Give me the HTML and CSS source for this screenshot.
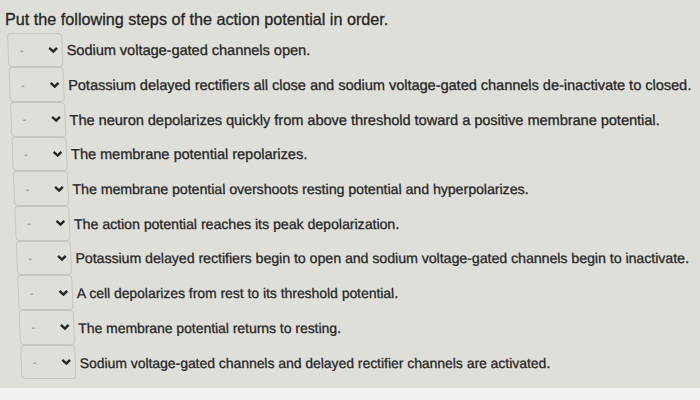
FILE: index.html
```html
<!DOCTYPE html>
<html lang="en">
<head>
    <meta charset="UTF-8">
    <title>Action potential ordering</title>
    <link rel="stylesheet" href="styles.css">
</head>
<body>
    <div class="page">
        <p class="prompt">Put the following steps of the action potential in order.</p>
        <ul class="steps">
            <li class="step">
                <span class="order-select"><span class="dash">-</span><svg class="chevron" viewBox="0 0 10 7"><polyline points="1.5,1.5 5,5 8.5,1.5"/></svg></span>
                <span class="step-text">Sodium voltage-gated channels open.</span>
            </li>
            <li class="step">
                <span class="order-select"><span class="dash">-</span><svg class="chevron" viewBox="0 0 10 7"><polyline points="1.5,1.5 5,5 8.5,1.5"/></svg></span>
                <span class="step-text">Potassium delayed rectifiers all close and sodium voltage-gated channels de-inactivate to closed.</span>
            </li>
            <li class="step">
                <span class="order-select"><span class="dash">-</span><svg class="chevron" viewBox="0 0 10 7"><polyline points="1.5,1.5 5,5 8.5,1.5"/></svg></span>
                <span class="step-text">The neuron depolarizes quickly from above threshold toward a positive membrane potential.</span>
            </li>
            <li class="step">
                <span class="order-select"><span class="dash">-</span><svg class="chevron" viewBox="0 0 10 7"><polyline points="1.5,1.5 5,5 8.5,1.5"/></svg></span>
                <span class="step-text">The membrane potential repolarizes.</span>
            </li>
            <li class="step">
                <span class="order-select"><span class="dash">-</span><svg class="chevron" viewBox="0 0 10 7"><polyline points="1.5,1.5 5,5 8.5,1.5"/></svg></span>
                <span class="step-text">The membrane potential overshoots resting potential and hyperpolarizes.</span>
            </li>
            <li class="step">
                <span class="order-select"><span class="dash">-</span><svg class="chevron" viewBox="0 0 10 7"><polyline points="1.5,1.5 5,5 8.5,1.5"/></svg></span>
                <span class="step-text">The action potential reaches its peak depolarization.</span>
            </li>
            <li class="step">
                <span class="order-select"><span class="dash">-</span><svg class="chevron" viewBox="0 0 10 7"><polyline points="1.5,1.5 5,5 8.5,1.5"/></svg></span>
                <span class="step-text">Potassium delayed rectifiers begin to open and sodium voltage-gated channels begin to inactivate.</span>
            </li>
            <li class="step">
                <span class="order-select"><span class="dash">-</span><svg class="chevron" viewBox="0 0 10 7"><polyline points="1.5,1.5 5,5 8.5,1.5"/></svg></span>
                <span class="step-text">A cell depolarizes from rest to its threshold potential.</span>
            </li>
            <li class="step">
                <span class="order-select"><span class="dash">-</span><svg class="chevron" viewBox="0 0 10 7"><polyline points="1.5,1.5 5,5 8.5,1.5"/></svg></span>
                <span class="step-text">The membrane potential returns to resting.</span>
            </li>
            <li class="step">
                <span class="order-select"><span class="dash">-</span><svg class="chevron" viewBox="0 0 10 7"><polyline points="1.5,1.5 5,5 8.5,1.5"/></svg></span>
                <span class="step-text">Sodium voltage-gated channels and delayed rectifier channels are activated.</span>
            </li>
        </ul>
        <div class="page-edge"></div>
    </div>
</body>
</html>
```

FILE: styles.css
```css
body {
    margin: 0;
    font-family: 'Liberation Sans', Arial, sans-serif;
    font-size: 14.5px;
    color: #262626;
    background-color: #dfdfda;
    -webkit-text-stroke: 0.3px #262626;
}
.page {
    height: 400px;
    display: flex;
    flex-direction: column;
    overflow: hidden;
}
.prompt {
    margin: 0;
    padding: 9px 0 0 5px;
    font-size: 16.2px;
    line-height: 20px;
}
.steps {
    list-style: none;
    margin: 4px 0 0 0;
    padding: 0 0 0 7px;
    /* the sheet leans a little to the right towards the bottom */
    transform: skewX(2.4deg);
    transform-origin: top left;
}
.step {
    display: flex;
    align-items: center;
    height: 34.7px;
}
.step:nth-child(n+5) .step-text {
    font-size: 14.1px;
}
.step:nth-child(n+8) .step-text {
    font-size: 13.9px;
}
.order-select {
    box-sizing: border-box;
    flex: none;
    width: 55px;
    height: 100%;
    display: flex;
    align-items: center;
    justify-content: space-between;
    padding: 0 3px 0 11px;
    border: 1px solid #c6c6c1;
    border-radius: 4px;
    margin-top: -1px;
}
.dash {
    color: #6e6e6c;
    font-size: 11px;
    -webkit-text-stroke: 0;
}
.chevron {
    width: 11px;
    height: 8px;
    fill: none;
    stroke: #262626;
    stroke-width: 2.2;
}
.step-text {
    margin-left: 4px;
    white-space: nowrap;
}
.page-edge {
    margin-top: auto;
    height: 12px;
    background-color: #f1f1ef;
}
```
